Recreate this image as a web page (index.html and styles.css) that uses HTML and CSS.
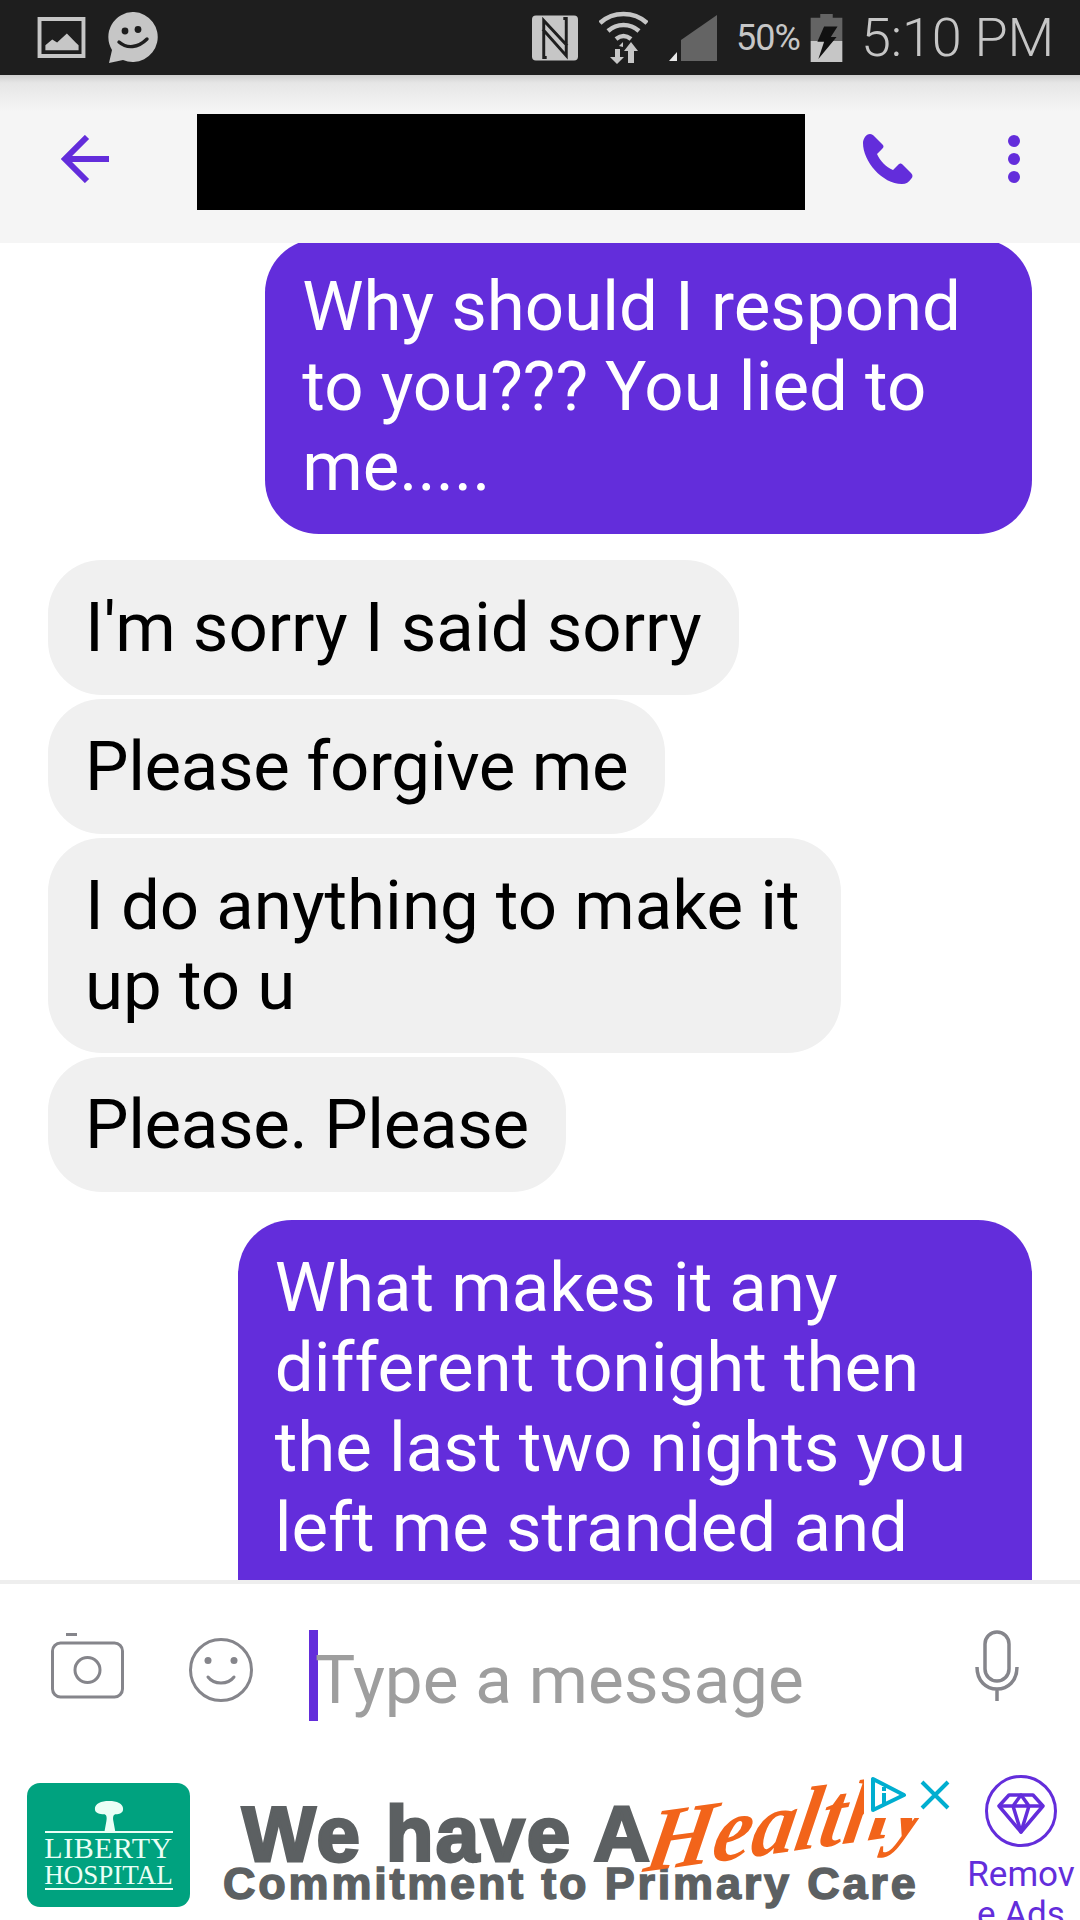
FILE: index.html
```html
<!DOCTYPE html>
<html lang="en">
<head>
    <meta charset="UTF-8">
    <title>Messages</title>
    <link rel="stylesheet" href="styles.css">
</head>
<body>
    <div class="screen">
        <div class="status-bar">
            <svg class="st-image" viewBox="0 0 49 42"><path fill="#c6c6c6" fill-rule="evenodd" d="M0 0h49v42H0zM4 4v34h41V4z"/><path fill="#c6c6c6" d="M8 34v-5l7-6 5 3 10-9 9 9 3 3v5z"/></svg>
            <svg class="st-smile" viewBox="0 0 51 51"><path fill="#c6c6c6" d="M26 0a25 25 0 1 1-11 48L1 51l3-13A25 25 0 0 1 26 0z"/><circle cx="17" cy="19" r="3.4" fill="#1e1e1e"/><circle cx="30" cy="17.500" r="3.400" fill="#1e1e1e"/><path fill="none" stroke="#1e1e1e" stroke-width="3.400" stroke-linecap="round" d="M11 30c8 7 19 6 28-3"/></svg>
            <div class="status-right">
                <svg class="st-nfc" viewBox="0 0 47 46"><rect width="47" height="46" rx="4" fill="#c6c6c6"/><path fill="none" stroke="#1e1e1e" stroke-width="3" d="M15 43H12V5l24 26M32 3h3v38L11 14"/></svg>
                <svg class="st-wifi" viewBox="0 0 49 53"><g fill="none" stroke="#c6c6c6" stroke-width="4.500"><path d="M1 12c13-12 34-12 47 0"/><path d="M9 20c9-8 22-8 31 0"/><path d="M17 28c5-4 10-4 15 0"/></g><path fill="#c6c6c6" d="M24 31l-4 4 4 1zM16 38h5v8h4l-7 7-7-7h5zM32 31l7 9h-4v12h-6V40h-4z"/></svg>
                <svg class="st-signal" viewBox="0 0 48 46"><path fill="#646464" d="M48 0v46H12V25z"/><path fill="#e8e8e8" d="M8 37v9H0z"/></svg>
                <span class="st-percent">50%</span>
                <svg class="st-battery" viewBox="0 0 33 50"><path fill="#646464" d="M10 0h13v4h10v24H0V4h10z"/><path fill="#c6c6c6" d="M0 28h33v22H0z"/><path fill="#111" d="M14 13h14l-7 11h6L8 47l6-18H7z"/></svg>
                <span class="st-time">5:10 PM</span>
            </div>
        </div>

        <div class="top-bar">
            <svg class="ic-back" viewBox="0 0 48 48"><path fill="none" stroke="#632ddb" stroke-width="6" d="M48 24H5M26 2 4 24l22 22"/></svg>
            <div class="redacted"></div>
            <svg class="ic-phone" viewBox="0 0 50 50"><path fill="#632ddb" d="M7 0c2 0 3 1 4 2l8 8c2 2 2 3 0 5l-5 5c3 7 9 13 16 16l5-5c2-2 3-2 5 0l8 8c2 2 2 4 0 6-2 3-5 5-9 5C19 50 0 27 0 9c0-4 3-9 7-9z"/></svg>
            <div class="ic-dots"><i></i><i></i><i></i></div>
        </div>

        <div class="messages">
            <div class="bubble sent first">Why should I respond<br>to you??? You lied to<br>me.....</div>
            <div class="bubble recv start">I'm sorry I said sorry</div>
            <div class="bubble recv tight">Please forgive me</div>
            <div class="bubble recv wide">I do anything to make it<br>up to u</div>
            <div class="bubble recv tight">Please. Please</div>
            <div class="bubble sent cut">What makes it any<br>different tonight then<br>the last two nights you<br>left me stranded and</div>
        </div>

        <div class="composer">
            <svg class="ic-camera" viewBox="0 0 73 66"><g fill="none" stroke="#85858b" stroke-width="3"><rect x="1.500" y="10" width="70" height="54" rx="8"/><circle cx="36.500" cy="37" r="12.500"/></g><path stroke="#85858b" stroke-width="3" d="M15 1.500h11"/></svg>
            <svg class="ic-emoji" viewBox="0 0 64 66"><circle cx="32" cy="33" r="30.500" fill="none" stroke="#85858b" stroke-width="3"/><circle cx="19" cy="23.500" r="3.500" fill="#85858b"/><circle cx="45" cy="23.500" r="3.500" fill="#85858b"/><path fill="none" stroke="#85858b" stroke-width="3" stroke-linecap="round" d="M19 40c6 8 20 8 26 0"/></svg>
            <div class="caret"></div>
            <span class="placeholder">Type a message</span>
            <svg class="ic-mic" viewBox="0 0 44 71"><g fill="none" stroke="#85858b" stroke-width="3.500"><rect x="10" y="2" width="24" height="49" rx="12"/><path d="M2 37c0 14 9 22 20 22s20-8 20-22M22 59v12"/></g></svg>
        </div>

        <div class="ad-row">
            <div class="ad-logo">
                <svg class="ad-tree" viewBox="0 0 36 34"><path fill="#eafff6" d="M18 0c9 0 16 3 16 9 0 5-5 6-8 6-3 0-4 3-3 8l2 11H13l2-11c1-5 0-8-3-8-4 0-10-1-10-6C2 3 9 0 18 0z"/></svg>
                <div class="ad-rule"></div>
                <div class="ad-liberty">LIBERTY</div>
                <div class="ad-hospital">HOSPITAL</div>
                <div class="ad-rule"></div>
            </div>
            <div class="ad-banner">
                <div class="ad-big">We have A</div>
                <div class="ad-small">Commitment to Primary Care</div>
                <span class="ad-script">Healthy</span>
                <div class="ad-choices">
                    <svg class="ad-i" viewBox="0 0 36 38"><path fill="none" stroke="#00aed0" stroke-width="4" stroke-linejoin="round" d="M3 3v31l31-15z"/><path stroke="#00aed0" stroke-width="4" d="M14 17v11M14 11v4"/></svg>
                    <svg class="ad-x" viewBox="0 0 30 30"><path stroke="#00aed0" stroke-width="4" d="M2 2l26 26M28 2 2 28"/></svg>
                </div>
            </div>
            <div class="remove-ads">
                <svg class="ic-diamond" viewBox="0 0 72 74"><circle cx="36" cy="37" r="34.500" fill="none" stroke="#632ddb" stroke-width="3"/><g fill="none" stroke="#632ddb" stroke-width="3.500" stroke-linejoin="round"><path d="M24 21h24l10 11-22 26-22-26z"/><path d="M14 32h44M28 32l8 26 8-26-8-11z"/></g></svg>
                <div class="remove-text">Remov<br>e Ads</div>
            </div>
        </div>
    </div>
</body>
</html>
```

FILE: styles.css
```css
html, body {
    margin: 0;
    padding: 0;
}
body {
    width: 1080px;
    height: 1920px;
    overflow: hidden;
    background-color: #fff;
    font-family: Roboto, "Liberation Sans", sans-serif;
}
svg {
    display: block;
    flex-shrink: 0;
}
.screen {
    display: flex;
    flex-direction: column;
    height: 1920px;
    overflow: hidden;
}

/* status bar */
.status-bar {
    display: flex;
    align-items: center;
    height: 75px;
    padding: 0 26px 0 37px;
    background-color: #1e1e1e;
    flex-shrink: 0;
}
.st-image {
    width: 49px;
    height: 41px;
}
.st-smile {
    width: 51px;
    height: 51px;
    margin-left: 22px;
}
.status-right {
    display: flex;
    align-items: center;
    margin-left: auto;
}
.st-nfc {
    width: 46px;
    height: 46px;
}
.st-wifi {
    width: 49px;
    height: 53px;
    margin-left: 21px;
}
.st-signal {
    width: 48px;
    height: 46px;
    margin-left: 21px;
}
.st-percent {
    width: 66px;
    margin-left: 19px;
    font-size: 36px;
    color: #c6c6c6;
    letter-spacing: -1px;
}
.st-battery {
    width: 33px;
    height: 48px;
    margin-left: 8px;
}
.st-time {
    margin-left: 18px;
    font-size: 54px;
    font-weight: 300;
    color: #c6c6c6;
    white-space: nowrap;
    letter-spacing: -0.2px;
}

/* top bar */
.top-bar {
    display: flex;
    align-items: center;
    height: 168px;
    padding: 6px 0 0 61px;
    box-sizing: border-box;
    background: linear-gradient(#cfcfcf, #e6e6e6 8px, #f5f5f5 36px);
    flex-shrink: 0;
}
.ic-back {
    width: 48px;
    height: 48px;
    margin-bottom: 6px;
}
.redacted {
    width: 608px;
    height: 96px;
    margin-left: 88px;
    background-color: #000;
}
.ic-phone {
    width: 50px;
    height: 50px;
    margin-left: 58px;
    margin-bottom: 6px;
}
.ic-dots {
    display: flex;
    flex-direction: column;
    gap: 6px;
    margin-left: 95px;
    margin-bottom: 6px;
}
.ic-dots i {
    display: block;
    width: 12px;
    height: 12px;
    border-radius: 50%;
    background-color: #632ddb;
}

/* messages */
.messages {
    display: flex;
    flex-direction: column;
    gap: 4px;
    flex: 1;
    min-height: 0;
    padding: 0 48px 0 48px;
    overflow: hidden;
}
.bubble {
    padding: 28px 37px 27px;
    border-radius: 54px;
    font-size: 69px;
    line-height: 80px;
    white-space: nowrap;
    flex-shrink: 0;
}
.sent {
    align-self: flex-end;
    background-color: #632ddb;
    color: #fff;
}
.recv {
    align-self: flex-start;
    background-color: #f0f0f0;
    color: #000;
}
.tight {
    letter-spacing: -0.35px;
}
.wide {
    padding-right: 41px;
}
.first {
    margin-top: -4px;
    padding-right: 71px;
}
.start {
    margin-top: 22px;
}
.cut {
    margin-top: 24px;
    padding-right: 66px;
    padding-bottom: 90px;
}

/* composer */
.composer {
    display: flex;
    align-items: center;
    height: 187px;
    padding: 0 61px 0 51px;
    box-sizing: border-box;
    border-top: 4px solid #eee;
    flex-shrink: 0;
}
.ic-camera {
    width: 73px;
    height: 66px;
    margin-bottom: 20px;
}
.ic-emoji {
    width: 64px;
    height: 66px;
    margin-left: 65px;
    margin-bottom: 12px;
}
.caret {
    width: 9px;
    height: 91px;
    margin-left: 56px;
    background-color: #632ddb;
}
.placeholder {
    margin-left: -3px;
    margin-top: 8px;
    font-size: 67.500px;
    color: #9e9e9e;
    white-space: nowrap;
}
.ic-mic {
    width: 44px;
    height: 71px;
    margin-left: auto;
    margin-bottom: 20px;
}

/* ad */
.ad-row {
    display: flex;
    height: 153px;
    padding: 16px 0 0 27px;
    box-sizing: border-box;
    flex-shrink: 0;
}
.ad-logo {
    display: flex;
    flex-direction: column;
    align-items: center;
    justify-content: center;
    width: 163px;
    height: 124px;
    border-radius: 13px;
    background-color: #00a27f;
    color: #eafff6;
    font-family: "Liberation Serif", serif;
    flex-shrink: 0;
}
.ad-tree {
    width: 32px;
    height: 30px;
}
.ad-rule {
    width: 128px;
    height: 2px;
    background-color: #eafff6;
}
.ad-liberty {
    font-size: 30px;
    line-height: 29px;
    letter-spacing: 0.5px;
}
.ad-hospital {
    font-size: 27px;
    line-height: 26px;
}
.ad-banner {
    position: relative;
    width: 775px;
    padding: 22px 0 0 33px;
    box-sizing: border-box;
    color: #5c6062;
    font-family: "Liberation Sans", sans-serif;
    font-weight: 700;
    white-space: nowrap;
    flex-shrink: 0;
}
.ad-big {
    padding-left: 19px;
    font-size: 78px;
    line-height: 58px;
    -webkit-text-stroke: 3px #5c6062;
    letter-spacing: 2.200px;
}
.ad-small {
    font-size: 45px;
    line-height: 42px;
    -webkit-text-stroke: 1.5px #5c6062;
    letter-spacing: 2.800px;
}
.ad-script {
    position: absolute;
    top: -12px;
    left: 456px;
    font-family: "Liberation Serif", serif;
    font-style: italic;
    font-size: 88px;
    color: #f2641a;
    transform: rotate(-8deg) skewX(-18deg);
}
.ad-choices {
    position: absolute;
    top: -7px;
    right: 12px;
    display: flex;
    align-items: center;
    gap: 14px;
    padding: 0 3px 4px 6px;
    background-color: #fff;
}
.ad-i {
    width: 36px;
    height: 38px;
}
.ad-x {
    width: 30px;
    height: 30px;
}
.remove-ads {
    display: flex;
    flex-direction: column;
    align-items: center;
    width: 110px;
    margin-top: -9px;
    margin-left: 1px;
}
.ic-diamond {
    width: 72px;
    height: 74px;
}
.remove-text {
    margin-top: 7px;
    font-size: 35px;
    line-height: 40px;
    color: #632ddb;
    text-align: center;
}
```
